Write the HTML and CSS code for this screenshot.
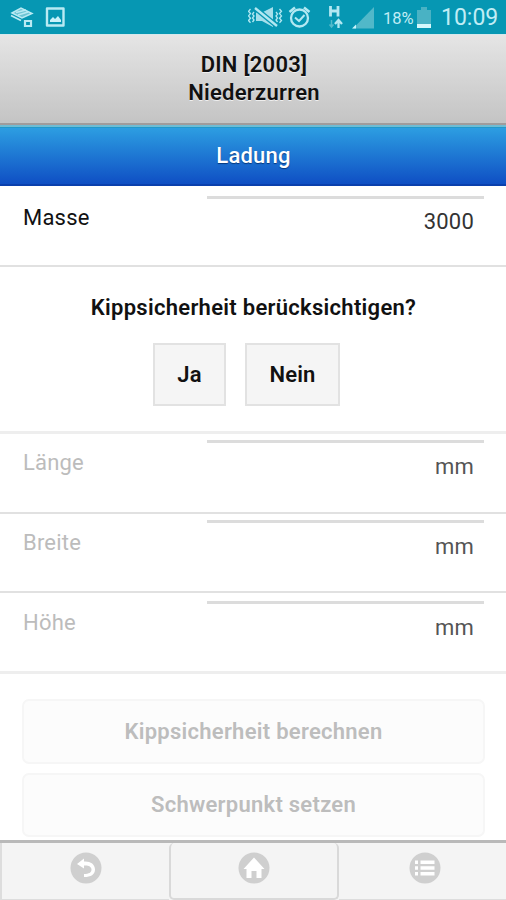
FILE: index.html
```html
<!DOCTYPE html>
<html lang="de">
<head>
<meta charset="utf-8">
<title>Niederzurren</title>
<link rel="stylesheet" href="styles.css">
</head>
<body>
<div class="app">
  <div class="status">
    <svg class="status-left" viewBox="0 0 80 34" fill="none" stroke="#b9eaf3">
      <path d="M12 13L21 8L32 13.500L22 18Z" fill="#6dc4d4" stroke-width="1.500"/>
      <path d="M16 12.500L26 10M18 15L28 12" stroke-width="1.500"/>
      <path d="M11 15.500L21 20.500" stroke-width="1.800"/>
      <path d="M25 21h6v5h-6z" stroke-width="2.200"/>
      <path d="M47 8.500h16.500v17h-16.500z" stroke-width="2.400" stroke-linejoin="round"/>
      <path d="M50 22v-2l3-3 2 2 3-3 3 4v2z" fill="#c9f2fa" stroke="none"/>
    </svg>
    <svg class="status-mid" viewBox="0 0 136 34" fill="none" stroke="#b3e8f2">
      <path d="M2.500 9l-2 2.300 2 2.300-2 2.300 2 2.300-2 2.300 2 2.300M6 12l-1.500 2 1.500 2-1.500 2 1.500 2-1.500 2M31.500 9l2 2.300-2 2.300 2 2.300-2 2.300 2 2.300-2 2.300M28 12l1.500 2-1.500 2 1.500 2-1.500 2 1.500 2" stroke-width="1.300"/>
      <path d="M8 12.500h6l11-5.500v20l-11-6h-6z" fill="#a5dfeb" stroke="none"/>
      <path d="M7 8l22 18" stroke="#0998b3" stroke-width="5"/>
      <path d="M7 8l22 18" stroke-width="2.300"/>
      <circle cx="51.500" cy="18" r="8.500" stroke-width="2.300"/>
      <path d="M41.500 12l5.500-4.500M61.500 12L56 7.500" stroke-width="2.500"/>
      <path d="M47 17.500l4 3.500 5.500-6" stroke-width="2"/>
      <path d="M82.500 6v10.500M90 6v10.500M82.500 11h7.500" stroke-width="2.800"/>
      <path d="M83.500 20v7M81.500 24.500l2 2.500 2-2.500" stroke="#54bacb" stroke-width="1.500"/>
      <path d="M90.500 28v-7M87 24l3.500-4 3.500 4" stroke-width="2.300"/>
      <path d="M105 28.500L126 7v21.500z" fill="#51b8c9" stroke="none"/>
      <path d="M104 28.500l4-4v4z" fill="#c9f4fb" stroke="none"/>
    </svg>
    <span class="percent">18%</span>
    <svg class="battery" viewBox="0 0 14 21"><path d="M0 3h4V0h6v3h4v18H0z" fill="#49b2c4"/><path d="M0 17h14v4H0z" fill="#d6f8fc"/></svg>
    <span class="clock">10:09</span>
  </div>
  <header class="header">DIN [2003]<br>Niederzurren</header>
  <h1 class="section">Ladung</h1>
  <main class="form">
    <div class="row row-mass"><label>Masse</label><div class="field number">3000</div></div>
    <section class="question">
      <h2>Kippsicherheit berücksichtigen?</h2>
      <div class="choices"><button class="yes">Ja</button><button class="no">Nein</button></div>
    </section>
    <div class="row row-length disabled"><label>Länge</label><div class="field">mm</div></div>
    <div class="row row-width disabled"><label>Breite</label><div class="field">mm</div></div>
    <div class="row row-height disabled"><label>Höhe</label><div class="field">mm</div></div>
    <div class="actions"><button>Kippsicherheit berechnen</button><button>Schwerpunkt setzen</button></div>
  </main>
  <nav class="nav">
    <a class="tab"><svg viewBox="0 0 32 32"><circle cx="16" cy="16" r="15.500" fill="#cfcfcf"/><path d="M7 12L14 6.500V9.500C20 9 25 12 25 17.500C25 22.500 21 25 14 25V22C19 22 21.500 20.500 21.500 17.500C21.500 14.500 18 13 14 13.500V16.500Z" fill="#fff"/></svg></a>
    <a class="tab home"><svg viewBox="0 0 32 32"><circle cx="16" cy="16" r="15.500" fill="#cfcfcf"/><path d="M16 5.500L26.500 17H23.500V26H18.500V19H13.500V26H8.500V17H5.500Z" fill="#fff"/></svg></a>
    <a class="tab list"><svg viewBox="0 0 32 32"><circle cx="16" cy="16" r="15.500" fill="#cfcfcf"/><path d="M6 8.500h3v3.500H6zM11.500 8.500h14v3.500h-14zM6 14.300h3v3.500H6zM11.500 14.300h14v3.500h-14zM6 20.100h3v3.500H6zM11.500 20.100h14v3.500h-14z" fill="#fff"/></svg></a>
  </nav>
</div>
</body>
</html>
```
FILE: styles.css
```css
* { box-sizing: border-box; }
body { margin: 0; background: #fff; font-family: Roboto, sans-serif; font-size: 22px; letter-spacing: 0.2px; color: #111; }
button { font: inherit; letter-spacing: inherit; color: inherit; padding: 0; margin: 0; }
.app { width: 506px; height: 900px; overflow: hidden; display: flex; flex-direction: column; }
.status { flex: none; height: 34px; background: #0697b3; color: #c0edf5; display: flex; align-items: center; letter-spacing: 0; }
.status-left { width: 80px; height: 34px; }
.status-mid { width: 136px; height: 34px; margin-left: 168px; }
.percent { width: 34px; font-size: 16.500px; line-height: 34px; padding-top: 3px; margin-left: -1px; }
.battery { width: 14px; height: 21px; margin: 1px 0 0 0; }
.clock { font-size: 23px; margin-left: 10px; line-height: 34px; padding-top: 2px; }
.header { flex: none; height: 91px; padding: 16px 0 0 2px; text-align: center; font-weight: 600; letter-spacing: 0.27px; line-height: 28px; background: linear-gradient(#e5e5e5, #c4c4c4); border-bottom: 2px solid #a09c9c; text-shadow: 0 1px 0 #eee; border-top: 1px solid #d5e8ec; }
.section { flex: none; height: 61px; margin: 0; padding: 1px 0 0 1px; font-size: 22px; font-weight: 500; line-height: 56px; text-align: center; color: #fff; background: linear-gradient(#2d9fe2, #0f4fc4); border-top: 2px solid #6fbcd4; border-bottom: 2px solid #0a40ad; box-shadow: inset 0 1px 0 #2299c9; text-shadow: 0 1px 1px #07387d; }
.form { flex: 1; min-height: 0; overflow: hidden; }
.row { display: flex; justify-content: space-between; padding: 0 22px 0 23px; border-bottom: 2px solid #e1e1e1; }
.row label { line-height: 26px; padding-top: 19px; }
.field { width: 277px; height: 52px; margin-top: 10px; border-top: 3px solid #dcdcdc; padding: 10px 10px 0 0; line-height: 26px; text-align: right; color: #444; }
.number { color: #333; }
.row-mass { height: 81px; }
.row-length { height: 80px; }
.row-width { height: 79px; }
.row-height { height: 81px; border-bottom: 3px solid #eee; }
.disabled label { color: #bcbcbc; padding-top: 16px; }
.disabled .field { margin-top: 6px; padding-top: 11px; color: #555; }
.row-height label { padding-top: 17px; }
.row-height .field { margin-top: 8px; }
.question { height: 167px; padding-top: 27px; border-bottom: 3px solid #eee; text-align: center; }
.question h2 { margin: 0; padding-left: 1px; font-size: 22px; font-weight: 600; letter-spacing: 0.29px; line-height: 28px; }
.choices { display: flex; margin: 21px 0 0 153px; gap: 19px; }
.choices button { height: 63px; background: #f5f5f5; border: 2px solid #e2e2e2; font-weight: 600; }
.yes { width: 73px; }
.no { width: 95px; }
.actions { padding: 25px 21px 0 22px; display: flex; flex-direction: column; gap: 9px; }
.actions button { height: 65px; border: 2px solid #f6f6f6; border-radius: 7px; background: #fcfcfc; color: #bdbdbd; font-weight: 600; letter-spacing: 0.27px; }
.actions button:last-child { height: 64px; padding-bottom: 1px; }
.nav { flex: none; height: 60px; display: grid; grid-template-columns: 169px 170px 167px; background: #f4f4f4; border-top: 3px solid #b9b9b9; }
.tab { display: flex; justify-content: center; padding-top: 9px; border-bottom: 1px solid #ddd; }
.tab:first-child { border-left: 2px solid #ddd; }
.tab svg { width: 32px; height: 32px; }
.home { border: 2px solid #d9d9d9; border-top: 0; border-radius: 5px; }
.list { padding-left: 4px; }
```
